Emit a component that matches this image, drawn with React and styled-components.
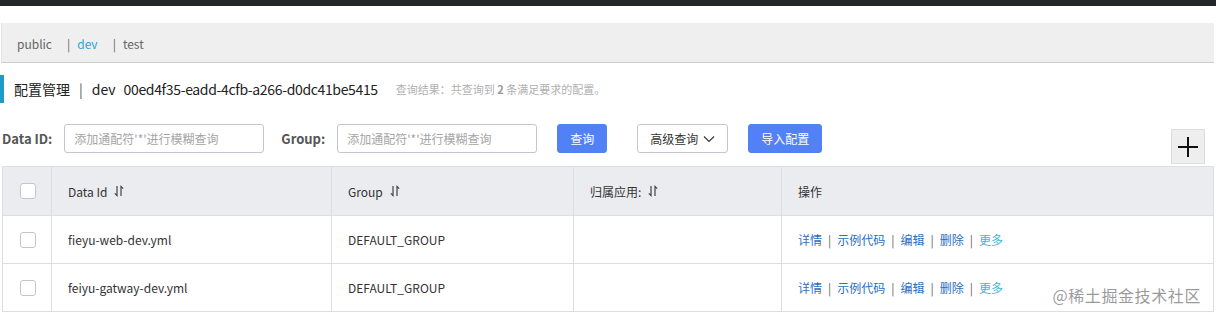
import React from 'react';
import styled, { createGlobalStyle } from 'styled-components';

const GlobalStyle = createGlobalStyle`
  body {
    margin: 0;
    background: #fff;
    font-family: "Noto Sans CJK SC", "Noto Sans", sans-serif;
    color: #333;
  }
`;

const Page = styled.div`
  position: relative;
  width: 1216px;
  height: 331px;
  overflow: hidden;
`;

const TopBar = styled.div`
  height: 6px;
  background: #23262b;
`;

const Body = styled.div`
  padding: 0 2px 0 1px;
`;

const NsBar = styled.div`
  margin-top: 17px;
  height: 40px;
  background: #efefef;
  border-left: 1px solid #e2e2e2;
  border-bottom: 1px solid #cdcdcd;
  display: flex;
  align-items: center;
  padding-left: 15px;
  padding-top: 1px;
  box-sizing: border-box;
  font-size: 12px;
  color: #666;
`;

const NsItem = styled.span`
  margin-right: 15px;
  color: ${p => (p.active ? '#31a4d8' : '#666')};
`;

const NsSep = styled.span`
  color: #666;
  margin-right: 7px;
`;

const TitleRow = styled.div`
  margin-top: 12px;
  margin-left: -1px;
  height: 28px;
  border-left: 4px solid #1b9bc6;
  padding-left: 10px;
  display: flex;
  align-items: center;
  font-size: 14px;
  color: #222;
`;

const Sep = styled.span`
  margin: 0 9px;
  color: #555;
`;

const Uuid = styled.span`
  margin-left: 8px;
  letter-spacing: -0.35px;
`;

const Hint = styled.span`
  margin-left: 18px;
  font-size: 11px;
  color: #b0b0b0;
  b {
    color: #999;
  }
`;

const FilterRow = styled.div`
  margin-top: 21px;
  display: flex;
  align-items: flex-start;
  height: 42px;
`;

const Label = styled.label`
  font-size: 13px;
  font-weight: bold;
  color: #555;
  line-height: 29px;
  margin-left: ${p => p.ml || 1}px;
  margin-right: 12px;
`;

const Input = styled.input`
  box-sizing: border-box;
  width: 200px;
  height: 29px;
  border: 1px solid #c4c6cf;
  border-radius: 3px;
  padding: 0 9px;
  font-family: inherit;
  font-size: 12px;
  outline: none;
  &::placeholder {
    color: #a5a5a5;
  }
`;

const Button = styled.button`
  box-sizing: border-box;
  height: 29px;
  width: ${p => p.w}px;
  margin-left: ${p => p.ml}px;
  border-radius: 3px;
  font-family: inherit;
  font-size: 12px;
  padding: 0;
  border: 1px solid ${p => (p.primary ? '#5181f5' : '#c4c6cf')};
  background: ${p => (p.primary ? '#5181f5' : '#fff')};
  color: ${p => (p.primary ? '#fff' : '#333')};
  display: flex;
  align-items: center;
  justify-content: center;
  gap: 5px;
`;

const Spacer = styled.div`
  flex: 1;
`;

const PlusButton = styled.button`
  box-sizing: border-box;
  width: 34px;
  height: 35px;
  margin-top: 5px;
  margin-right: 9px;
  background: #eeeeee;
  border: 1px solid #dddddd;
  padding: 0;
  display: flex;
  align-items: center;
  justify-content: center;
`;

const Table = styled.table`
  table-layout: fixed;
  border-collapse: collapse;
  font-size: 12px;
  color: #333;
  margin-left: 1px;
  width: 1212px;
`;

const Th = styled.th`
  height: 48px;
  background: #ebecf0;
  border: 1px solid #dcdee3;
  text-align: left;
  font-weight: normal;
  padding: 0 0 0 ${p => p.pl || 16}px;
  color: #333;
`;

const Td = styled.td`
  height: 47px;
  border: 1px solid #dcdee3;
  padding: 0 0 0 ${p => p.pl || 16}px;
  color: #333;
`;

const Check = styled.span`
  display: inline-block;
  box-sizing: border-box;
  width: 16px;
  height: 16px;
  border: 1px solid #c4c6cf;
  border-radius: 3px;
  background: #fff;
  vertical-align: middle;
  margin-top: -4px;
`;

const HeadText = styled.span`
  display: inline-flex;
  align-items: center;
  gap: 7px;
`;

const Link = styled.a`
  color: ${p => (p.more ? '#43b4d8' : '#2a6ebf')};
  text-decoration: none;
`;

const LinkSep = styled.span`
  color: #666;
  margin: 0 6px;
`;

const Watermark = styled.div`
  position: absolute;
  right: 15px;
  bottom: 24px;
  font-size: 16px;
  letter-spacing: 0.6px;
  color: rgba(120, 120, 120, 0.75);
  text-shadow: 0 0 1px rgba(255, 255, 255, 0.8);
`;

const SortIcon = () => (
  <svg width="10" height="12" viewBox="0 0 10 12" fill="none" stroke="#444" strokeWidth="1.2">
    <path d="M3 1 V10.5 L0.8 8.3" />
    <path d="M7 11 V1.5 L9.2 3.7" />
  </svg>
);

const ChevronDown = () => (
  <svg width="12" height="8" viewBox="0 0 12 8" fill="none" stroke="#333" strokeWidth="1.1">
    <path d="M1 1.5 L6 6.5 L11 1.5" />
  </svg>
);

const PlusIcon = () => (
  <svg width="22" height="22" viewBox="0 0 22 22" stroke="#111" strokeWidth="2">
    <path d="M11 1 V21 M1 11 H21" />
  </svg>
);

const rows = [
  { id: 'fieyu-web-dev.yml', group: 'DEFAULT_GROUP' },
  { id: 'feiyu-gatway-dev.yml', group: 'DEFAULT_GROUP' },
];

const actions = ['详情', '示例代码', '编辑', '删除'];

export default function App() {
  return (
    <Page>
      <GlobalStyle />
      <TopBar />
      <Body>
        <NsBar>
          <NsItem>public</NsItem>
          <NsItem active>
            <NsSep>|</NsSep>dev
          </NsItem>
          <NsItem>
            <NsSep>|</NsSep>test
          </NsItem>
        </NsBar>

        <TitleRow>
          <span>配置管理</span>
          <Sep>|</Sep>
          <span>dev</span>
          <Uuid>00ed4f35-eadd-4cfb-a266-d0dc41be5415</Uuid>
          <Hint>
            查询结果：共查询到 <b>2</b> 条满足要求的配置。
          </Hint>
        </TitleRow>

        <FilterRow>
          <Label>Data ID:</Label>
          <Input placeholder="添加通配符'*'进行模糊查询" />
          <Label ml={17}>Group:</Label>
          <Input placeholder="添加通配符'*'进行模糊查询" />
          <Button primary w={50} ml={20}>查询</Button>
          <Button w={91} ml={30}>
            高级查询 <ChevronDown />
          </Button>
          <Button primary w={74} ml={20}>导入配置</Button>
          <Spacer />
          <PlusButton>
            <PlusIcon />
          </PlusButton>
        </FilterRow>

        <Table>
          <colgroup>
            <col style={{ width: 49 }} />
            <col style={{ width: 280 }} />
            <col style={{ width: 242 }} />
            <col style={{ width: 208 }} />
            <col />
          </colgroup>
          <thead>
            <tr>
              <Th pl={17}>
                <Check />
              </Th>
              <Th>
                <HeadText>
                  Data Id <SortIcon />
                </HeadText>
              </Th>
              <Th>
                <HeadText>
                  Group <SortIcon />
                </HeadText>
              </Th>
              <Th>
                <HeadText>
                  归属应用: <SortIcon />
                </HeadText>
              </Th>
              <Th>操作</Th>
            </tr>
          </thead>
          <tbody>
            {rows.map(r => (
              <tr key={r.id}>
                <Td pl={17}>
                  <Check />
                </Td>
                <Td>{r.id}</Td>
                <Td>{r.group}</Td>
                <Td />
                <Td>
                  {actions.map(a => (
                    <React.Fragment key={a}>
                      <Link href="#">{a}</Link>
                      <LinkSep>|</LinkSep>
                    </React.Fragment>
                  ))}
                  <Link href="#" more>更多</Link>
                </Td>
              </tr>
            ))}
          </tbody>
        </Table>
      </Body>
      <Watermark>@稀土掘金技术社区</Watermark>
    </Page>
  );
}
